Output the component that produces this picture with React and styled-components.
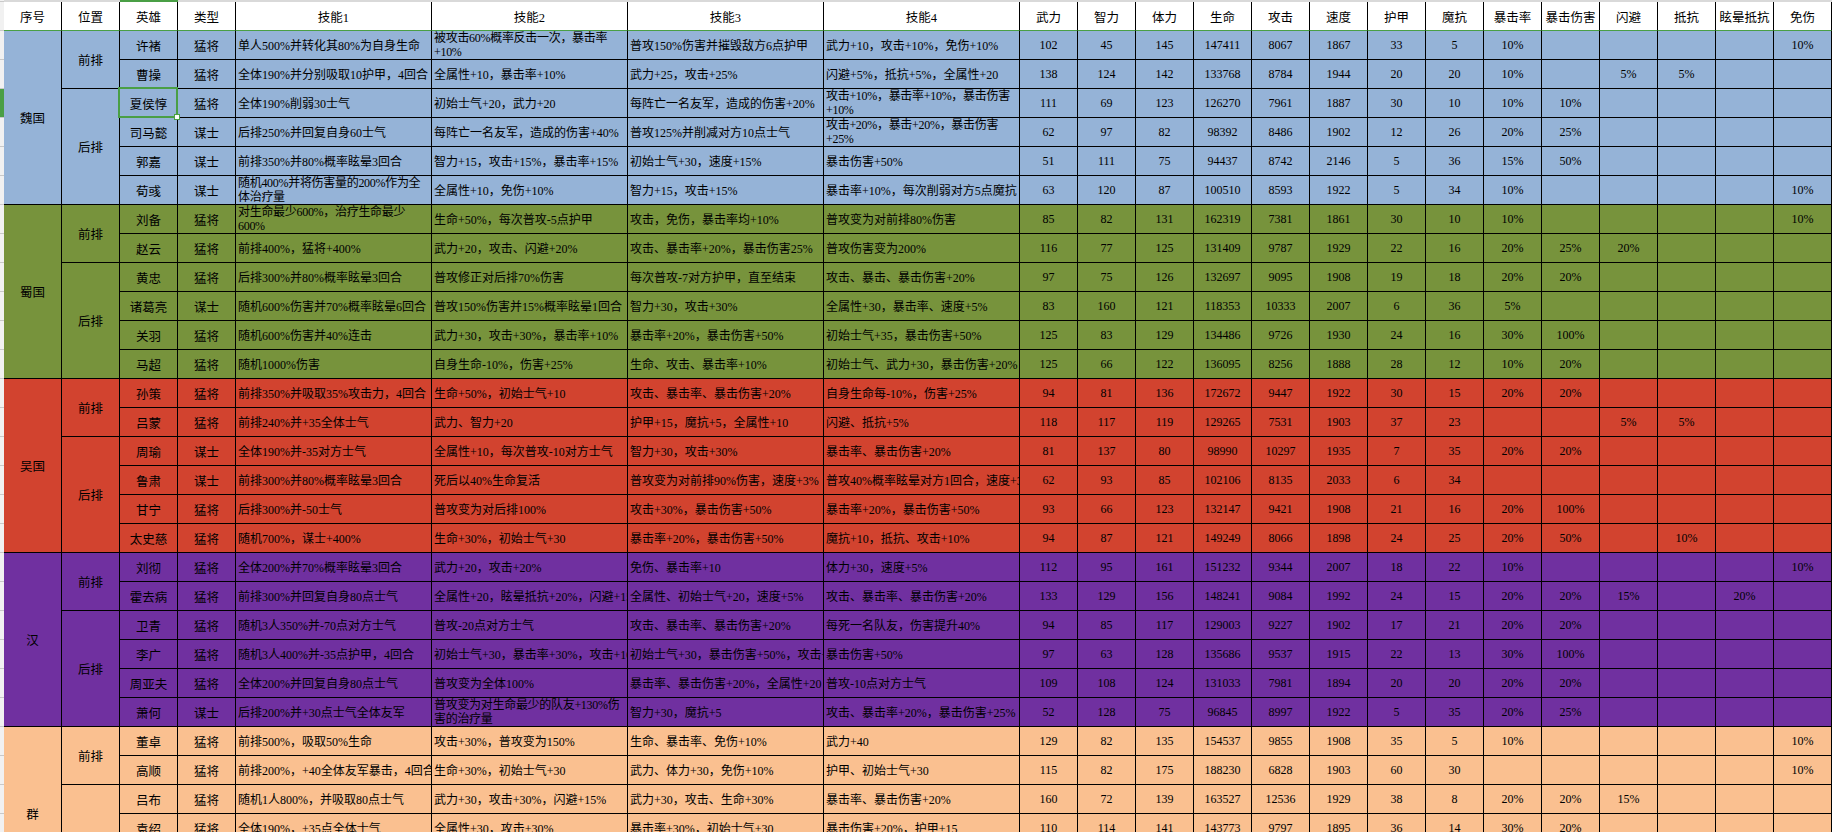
import React from 'react';
import styled, { createGlobalStyle } from 'styled-components';

const GREEN = '#4a9f45';

const GlobalStyle = createGlobalStyle`
  html, body {
    margin: 0;
    padding: 0;
    background: #fff;
    overflow: hidden;
  }
`;

const HEADERS = [
  '序号', '位置', '英雄', '类型', '技能1', '技能2', '技能3', '技能4',
  '武力', '智力', '体力', '生命', '攻击', '速度', '护甲', '魔抗',
  '暴击率', '暴击伤害', '闪避', '抵抗', '眩晕抵抗', '免伤',
];

const COL_WIDTHS = [58, 58, 58, 58, 196, 196, 196, 196, ...Array(14).fill(58)];

const groups = [
  {
    name: '魏国',
    color: '#95B3D7',
    lines: [
      {
        pos: '前排',
        heroes: [
          ['许褚', '猛将', '单人500%并转化其80%为自身生命', '被攻击60%概率反击一次，暴击率\n+10%', '普攻150%伤害并摧毁敌方6点护甲', '武力+10，攻击+10%，免伤+10%', [102, 45, 145, 147411, 8067, 1867, 33, 5, '10%', '', '', '', '', '10%']],
          ['曹操', '猛将', '全体190%并分别吸取10护甲，4回合', '全属性+10，暴击率+10%', '武力+25，攻击+25%', '闪避+5%，抵抗+5%，全属性+20', [138, 124, 142, 133768, 8784, 1944, 20, 20, '10%', '', '5%', '5%', '', '']],
        ],
      },
      {
        pos: '后排',
        heroes: [
          ['夏侯惇', '猛将', '全体190%削弱30士气', '初始士气+20，武力+20', '每阵亡一名友军，造成的伤害+20%', '攻击+10%，暴击率+10%，暴击伤害\n+10%', [111, 69, 123, 126270, 7961, 1887, 30, 10, '10%', '10%', '', '', '', '']],
          ['司马懿', '谋士', '后排250%并回复自身60士气', '每阵亡一名友军，造成的伤害+40%', '普攻125%并削减对方10点士气', '攻击+20%，暴击+20%，暴击伤害\n+25%', [62, 97, 82, 98392, 8486, 1902, 12, 26, '20%', '25%', '', '', '', '']],
          ['郭嘉', '谋士', '前排350%并80%概率眩晕3回合', '智力+15，攻击+15%，暴击率+15%', '初始士气+30，速度+15%', '暴击伤害+50%', [51, 111, 75, 94437, 8742, 2146, 5, 36, '15%', '50%', '', '', '', '']],
          ['荀彧', '谋士', '随机400%并将伤害量的200%作为全\n体治疗量', '全属性+10，免伤+10%', '智力+15，攻击+15%', '暴击率+10%，每次削弱对方5点魔抗', [63, 120, 87, 100510, 8593, 1922, 5, 34, '10%', '', '', '', '', '10%']],
        ],
      },
    ],
  },
  {
    name: '蜀国',
    color: '#77933C',
    lines: [
      {
        pos: '前排',
        heroes: [
          ['刘备', '猛将', '对生命最少600%，治疗生命最少\n600%', '生命+50%，每次普攻-5点护甲', '攻击，免伤，暴击率均+10%', '普攻变为对前排80%伤害', [85, 82, 131, 162319, 7381, 1861, 30, 10, '10%', '', '', '', '', '10%']],
          ['赵云', '猛将', '前排400%，猛将+400%', '武力+20，攻击、闪避+20%', '攻击、暴击率+20%，暴击伤害25%', '普攻伤害变为200%', [116, 77, 125, 131409, 9787, 1929, 22, 16, '20%', '25%', '20%', '', '', '']],
        ],
      },
      {
        pos: '后排',
        heroes: [
          ['黄忠', '猛将', '后排300%并80%概率眩晕3回合', '普攻修正对后排70%伤害', '每次普攻-7对方护甲，直至结束', '攻击、暴击、暴击伤害+20%', [97, 75, 126, 132697, 9095, 1908, 19, 18, '20%', '20%', '', '', '', '']],
          ['诸葛亮', '谋士', '随机600%伤害并70%概率眩晕6回合', '普攻150%伤害并15%概率眩晕1回合', '智力+30，攻击+30%', '全属性+30，暴击率、速度+5%', [83, 160, 121, 118353, 10333, 2007, 6, 36, '5%', '', '', '', '', '']],
          ['关羽', '猛将', '随机600%伤害并40%连击', '武力+30，攻击+30%，暴击率+10%', '暴击率+20%，暴击伤害+50%', '初始士气+35，暴击伤害+50%', [125, 83, 129, 134486, 9726, 1930, 24, 16, '30%', '100%', '', '', '', '']],
          ['马超', '猛将', '随机1000%伤害', '自身生命-10%，伤害+25%', '生命、攻击、暴击率+10%', '初始士气、武力+30，暴击伤害+20%', [125, 66, 122, 136095, 8256, 1888, 28, 12, '10%', '20%', '', '', '', '']],
        ],
      },
    ],
  },
  {
    name: '吴国',
    color: '#D2432F',
    lines: [
      {
        pos: '前排',
        heroes: [
          ['孙策', '猛将', '前排350%并吸取35%攻击力，4回合', '生命+50%，初始士气+10', '攻击、暴击率、暴击伤害+20%', '自身生命每-10%，伤害+25%', [94, 81, 136, 172672, 9447, 1922, 30, 15, '20%', '20%', '', '', '', '']],
          ['吕蒙', '猛将', '前排240%并+35全体士气', '武力、智力+20', '护甲+15，魔抗+5，全属性+10', '闪避、抵抗+5%', [118, 117, 119, 129265, 7531, 1903, 37, 23, '', '', '5%', '5%', '', '']],
        ],
      },
      {
        pos: '后排',
        heroes: [
          ['周瑜', '谋士', '全体190%并-35对方士气', '全属性+10，每次普攻-10对方士气', '智力+30，攻击+30%', '暴击率、暴击伤害+20%', [81, 137, 80, 98990, 10297, 1935, 7, 35, '20%', '20%', '', '', '', '']],
          ['鲁肃', '谋士', '前排300%并80%概率眩晕3回合', '死后以40%生命复活', '普攻变为对前排90%伤害，速度+3%', '普攻40%概率眩晕对方1回合，速度+3%', [62, 93, 85, 102106, 8135, 2033, 6, 34, '', '', '', '', '', '']],
          ['甘宁', '猛将', '后排300%并-50士气', '普攻变为对后排100%', '攻击+30%，暴击伤害+50%', '暴击率+20%，暴击伤害+50%', [93, 66, 123, 132147, 9421, 1908, 21, 16, '20%', '100%', '', '', '', '']],
          ['太史慈', '猛将', '随机700%，谋士+400%', '生命+30%，初始士气+30', '暴击率+20%，暴击伤害+50%', '魔抗+10，抵抗、攻击+10%', [94, 87, 121, 149249, 8066, 1898, 24, 25, '20%', '50%', '', '10%', '', '']],
        ],
      },
    ],
  },
  {
    name: '汉',
    color: '#7030A0',
    lines: [
      {
        pos: '前排',
        heroes: [
          ['刘彻', '猛将', '全体200%并70%概率眩晕3回合', '武力+20，攻击+20%', '免伤、暴击率+10', '体力+30，速度+5%', [112, 95, 161, 151232, 9344, 2007, 18, 22, '10%', '', '', '', '', '10%']],
          ['霍去病', '猛将', '前排300%并回复自身80点士气', '全属性+20，眩晕抵抗+20%，闪避+15%', '全属性、初始士气+20，速度+5%', '攻击、暴击率、暴击伤害+20%', [133, 129, 156, 148241, 9084, 1992, 24, 15, '20%', '20%', '15%', '', '20%', '']],
        ],
      },
      {
        pos: '后排',
        heroes: [
          ['卫青', '猛将', '随机3人350%并-70点对方士气', '普攻-20点对方士气', '攻击、暴击率、暴击伤害+20%', '每死一名队友，伤害提升40%', [94, 85, 117, 129003, 9227, 1902, 17, 21, '20%', '20%', '', '', '', '']],
          ['李广', '猛将', '随机3人400%并-35点护甲，4回合', '初始士气+30，暴击率+30%，攻击+10%', '初始士气+30，暴击伤害+50%，攻击+10%', '暴击伤害+50%', [97, 63, 128, 135686, 9537, 1915, 22, 13, '30%', '100%', '', '', '', '']],
          ['周亚夫', '猛将', '全体200%并回复自身80点士气', '普攻变为全体100%', '暴击率、暴击伤害+20%，全属性+20', '普攻-10点对方士气', [109, 108, 124, 131033, 7981, 1894, 20, 20, '20%', '20%', '', '', '', '']],
          ['萧何', '谋士', '后排200%并+30点士气全体友军', '普攻变为对生命最少的队友+130%伤\n害的治疗量', '智力+30，魔抗+5', '攻击、暴击率+20%，暴击伤害+25%', [52, 128, 75, 96845, 8997, 1922, 5, 35, '20%', '25%', '', '', '', '']],
        ],
      },
    ],
  },
  {
    name: '群',
    color: '#FAC090',
    lines: [
      {
        pos: '前排',
        heroes: [
          ['董卓', '猛将', '前排500%，吸取50%生命', '攻击+30%，普攻变为150%', '生命、暴击率、免伤+10%', '武力+40', [129, 82, 135, 154537, 9855, 1908, 35, 5, '10%', '', '', '', '', '10%']],
          ['高顺', '猛将', '前排200%，+40全体友军暴击，4回合', '生命+30%，初始士气+30', '武力、体力+30，免伤+10%', '护甲、初始士气+30', [115, 82, 175, 188230, 6828, 1903, 60, 30, '', '', '', '', '', '10%']],
        ],
      },
      {
        pos: '后排',
        heroes: [
          ['吕布', '猛将', '随机1人800%，并吸取80点士气', '武力+30，攻击+30%，闪避+15%', '武力+30，攻击、生命+30%', '暴击率、暴击伤害+20%', [160, 72, 139, 163527, 12536, 1929, 38, 8, '20%', '20%', '15%', '', '', '']],
          ['袁绍', '猛将', '全体190%，+35点全体士气', '全属性+30，攻击+30%', '暴击率+30%，初始士气+30', '暴击伤害+20%，护甲+15', [110, 114, 141, 143773, 9797, 1895, 36, 14, '30%', '20%', '', '', '', '']],
          ['', '', '', '', '', '', Array(14).fill('')],
          ['', '', '', '', '', '', Array(14).fill('')],
        ],
      },
    ],
  },
];

const SELECTED = '夏侯惇';
const ROW_H = 29;

const Sheet = styled.div`
  display: flex;
  align-items: flex-start;
  width: 1832px;
  height: 832px;
  overflow: hidden;
  background: #fff;
`;

const Gutter = styled.div`
  display: flex;
  flex-direction: column;
  flex: none;
  width: 4px;
`;

const GutterCell = styled.div`
  height: ${(p) => p.$h}px;
  box-sizing: border-box;
  border-bottom: 1px solid #c9c9c9;
  background: ${(p) => (p.$active ? GREEN : '#f1f1f1')};
`;

const Grid = styled.table`
  border-collapse: separate;
  border-spacing: 0;
  table-layout: fixed;
  width: 1828px;
  flex: none;
  font-family: "Liberation Serif", "Noto Sans CJK SC", serif;
  font-size: 12px;
  color: #000;
`;

const EdgeCell = styled.td`
  height: 2px;
  padding: 0;
  font-size: 0;
  line-height: 0;
  background: ${(p) => (p.$active ? GREEN : '#d9d9d9')};
`;

const HeadCell = styled.th`
  height: 29px;
  box-sizing: border-box;
  padding: 0;
  background: #fff;
  border-right: 1px solid #000;
  border-bottom: 1px solid ${GREEN};
  font-size: 12.5px;
  font-weight: normal;
  text-align: center;
  vertical-align: middle;
  white-space: nowrap;
  overflow: hidden;
`;

const Row = styled.tr`
  height: ${ROW_H}px;
`;

const Cell = styled.td`
  height: ${ROW_H}px;
  box-sizing: border-box;
  padding: 0 ${(p) => (p.$left ? '2px' : '0')};
  background: ${(p) => p.$bg};
  border-right: 1px solid #000;
  border-bottom: 1px solid #000;
  text-align: ${(p) => (p.$left ? 'left' : 'center')};
  vertical-align: middle;
  white-space: nowrap;
  overflow: hidden;
`;

const LabelCell = styled(Cell)`
  font-size: 12.5px;
`;

const NameCell = styled(LabelCell)`
  position: ${(p) => (p.$selected ? 'relative' : 'static')};
  overflow: ${(p) => (p.$selected ? 'visible' : 'hidden')};
`;

const SelectionFrame = styled.div`
  position: absolute;
  top: -2px;
  left: -2px;
  right: -1px;
  bottom: -1px;
  border: 2px solid ${GREEN};
  pointer-events: none;
  z-index: 1;
`;

const FillHandle = styled.div`
  position: absolute;
  right: -4px;
  bottom: -4px;
  width: 4px;
  height: 4px;
  background: #fff;
  border: 1px solid ${GREEN};
`;

const Wrapped = styled.div`
  white-space: pre;
  line-height: 14px;
  letter-spacing: -0.3px;
  max-height: 28px;
  overflow: hidden;
`;

const Skill = ({ text, bg }) => (
  <Cell $bg={bg} $left>
    {text.includes('\n') ? <Wrapped>{text}</Wrapped> : text}
  </Cell>
);

const App = () => {
  const rowCount = groups.reduce(
    (n, g) => n + g.lines.reduce((m, l) => m + l.heroes.length, 0),
    0
  );
  let rowIndex = 0;
  let selectedIndex = -1;

  const body = groups.map((group) => {
    const total = group.lines.reduce((n, l) => n + l.heroes.length, 0);
    return group.lines.map((line, li) =>
      line.heroes.map((hero, hi) => {
        const [name, type, s1, s2, s3, s4, stats] = hero;
        const selected = name === SELECTED;
        if (selected) selectedIndex = rowIndex;
        rowIndex += 1;
        return (
          <Row key={`${group.name}-${li}-${hi}`}>
            {li === 0 && hi === 0 && (
              <LabelCell rowSpan={total} $bg={group.color}>
                {group.name}
              </LabelCell>
            )}
            {hi === 0 && (
              <LabelCell rowSpan={line.heroes.length} $bg={group.color}>
                {line.pos}
              </LabelCell>
            )}
            <NameCell $bg={group.color} $selected={selected}>
              {name}
              {selected && (
                <SelectionFrame>
                  <FillHandle />
                </SelectionFrame>
              )}
            </NameCell>
            <LabelCell $bg={group.color}>{type}</LabelCell>
            {[s1, s2, s3, s4].map((s, i) => (
              <Skill key={i} text={s} bg={group.color} />
            ))}
            {stats.map((v, i) => (
              <Cell key={i} $bg={group.color}>
                {v}
              </Cell>
            ))}
          </Row>
        );
      })
    );
  });

  return (
    <>
      <GlobalStyle />
      <Sheet>
        <Gutter>
          <GutterCell $h={2} />
          <GutterCell $h={29} />
          {Array.from({ length: rowCount }, (_, i) => (
            <GutterCell key={i} $h={ROW_H} $active={i === selectedIndex} />
          ))}
        </Gutter>
        <Grid>
          <colgroup>
            {COL_WIDTHS.map((w, i) => (
              <col key={i} style={{ width: w }} />
            ))}
          </colgroup>
          <thead>
            <tr>
              {HEADERS.map((h) => (
                <EdgeCell key={h} $active={h === '英雄'} />
              ))}
            </tr>
            <tr>
              {HEADERS.map((h) => (
                <HeadCell key={h}>{h}</HeadCell>
              ))}
            </tr>
          </thead>
          <tbody>{body}</tbody>
        </Grid>
      </Sheet>
    </>
  );
};

export default App;
